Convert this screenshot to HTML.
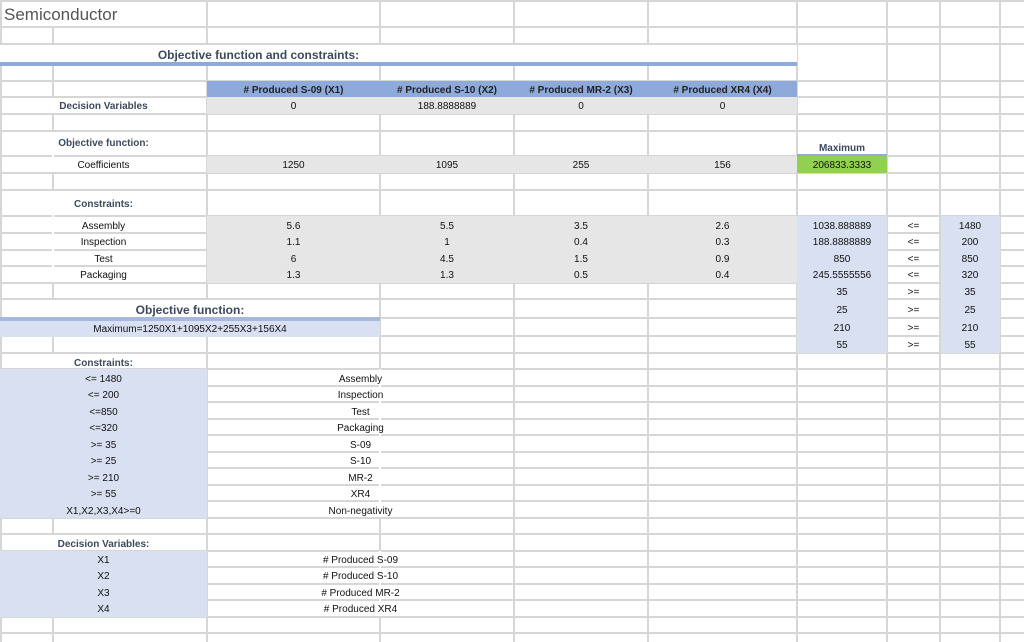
<!DOCTYPE html>
<html><head><meta charset="utf-8"><style>
body{margin:0;width:1024px;height:642px;overflow:hidden;background:#fff;position:relative;font-family:"Liberation Sans",sans-serif;font-size:10px;color:#111}
.h,.v{position:absolute;background:#d6d6d6}
.h{left:0;width:1024px;height:2px}
.v{top:0;height:642px;width:2px}
.f{position:absolute}
.c{position:absolute;text-align:center;display:flex;align-items:center;justify-content:center;white-space:nowrap}
.b{font-weight:bold;color:#3d4a5c}
.g{background:#e6e6e6}
.l{background:#d9e0f1}
.w{background:#fff}
</style></head><body>
<div id="grid"></div>
<script>
var g=document.getElementById('grid'),s='';
[0,26,43,80,96,113,130,155,172,189,215,232,249,265,282,298,317,335,352,368,385,401,418,434,451,467,484,500,517,533,550,566,583,599,616,632].forEach(function(y){s+='<div class="h" style="top:'+y+'px"></div>'});
[0,52,206,379,513,647,796,886,939,999].forEach(function(x){s+='<div class="v" style="left:'+x+'px"></div>'});
g.innerHTML=s;
</script>
<!-- white merges -->
<div class="f w" style="left:2px;top:2px;width:204px;height:24px"></div>
<div class="f w" style="left:0;top:45px;width:797px;height:17px"></div>
<div class="f w" style="left:2px;top:98px;width:204px;height:15px"></div>
<div class="f w" style="left:2px;top:132px;width:204px;height:23px"></div>
<div class="f w" style="left:52px;top:155px;width:2px;height:17px"></div>
<div class="f w" style="left:2px;top:191px;width:204px;height:24px"></div>
<div class="f w" style="left:52px;top:215px;width:2px;height:67px"></div>
<div class="f w" style="left:2px;top:300px;width:377px;height:17px"></div>
<div class="f w" style="left:2px;top:354px;width:204px;height:14px"></div>
<div class="f w" style="left:2px;top:535px;width:204px;height:15px"></div>
<div class="f w" style="left:379px;top:369px;width:2px;height:148px"></div>
<div class="f w" style="left:379px;top:551px;width:2px;height:65px"></div>
<div class="f w" style="left:798px;top:132px;width:88px;height:23px"></div>
<!-- fills -->
<div class="f" style="left:0;top:62px;width:797px;height:4px;background:#8eaadb"></div>
<div class="f" style="left:207px;top:81px;width:590px;height:16px;background:#8eaadb"></div>
<div class="f g" style="left:207px;top:97px;width:590px;height:17px"></div>
<div class="f g" style="left:207px;top:156px;width:590px;height:17px"></div>
<div class="f" style="left:797px;top:154px;width:90px;height:19px;background:#92d050"></div>
<div class="f" style="left:797px;top:154px;width:90px;height:2px;background:#8eaadb"></div>
<div class="f g" style="left:207px;top:216px;width:590px;height:67px"></div>
<div class="f l" style="left:797px;top:216px;width:90px;height:137px"></div>
<div class="f l" style="left:941px;top:216px;width:59px;height:137px"></div>
<div class="f" style="left:0;top:317px;width:380px;height:4px;background:#a6b8de"></div>
<div class="f l" style="left:0;top:321px;width:380px;height:16px"></div>
<div class="f l" style="left:0;top:369px;width:207px;height:149px"></div>
<div class="f l" style="left:0;top:551px;width:207px;height:66px"></div>
<!-- text -->
<div class="c" style="left:4px;top:2px;width:200px;height:26px;justify-content:flex-start;font-size:17px;color:#555">Semiconductor</div>
<div class="c b" style="left:0;top:45px;width:517px;height:20px;font-size:12px">Objective function and constraints:</div>
<div class="c b" style="left:207px;top:82px;width:173px;height:16px;color:#222">#&nbsp;Produced S-09 (X1)</div>
<div class="c b" style="left:380px;top:82px;width:134px;height:16px;color:#222"># Produced S-10 (X2)</div>
<div class="c b" style="left:514px;top:82px;width:134px;height:16px;color:#222"># Produced MR-2 (X3)</div>
<div class="c b" style="left:648px;top:82px;width:149px;height:16px;color:#222"># Produced XR4 (X4)</div>
<div class="c b" style="left:0;top:98px;width:207px;height:17px">Decision Variables</div>
<div class="c" style="left:207px;top:98px;width:173px;height:17px">0</div>
<div class="c" style="left:380px;top:98px;width:134px;height:17px">188.8888889</div>
<div class="c" style="left:514px;top:98px;width:134px;height:17px">0</div>
<div class="c" style="left:648px;top:98px;width:149px;height:17px">0</div>
<div class="c b" style="left:0;top:133px;width:207px;height:20px">Objective function:</div>
<div class="c b" style="left:797px;top:140px;width:90px;height:16px">Maximum</div>
<div class="c" style="left:0;top:157px;width:207px;height:17px">Coefficients</div>
<div class="c" style="left:207px;top:157px;width:173px;height:17px">1250</div>
<div class="c" style="left:380px;top:157px;width:134px;height:17px">1095</div>
<div class="c" style="left:514px;top:157px;width:134px;height:17px">255</div>
<div class="c" style="left:648px;top:157px;width:149px;height:17px">156</div>
<div class="c" style="left:797px;top:157px;width:90px;height:17px">206833.3333</div>
<div class="c b" style="left:0;top:194px;width:207px;height:20px">Constraints:</div>
<div id="rows"></div>
<script>
var d=[["Assembly","5.6","5.5","3.5","2.6","1038.888889","<=","1480"],["Inspection","1.1","1","0.4","0.3","188.8888889","<=","200"],["Test","6","4.5","1.5","0.9","850","<=","850"],["Packaging","1.3","1.3","0.5","0.4","245.5555556","<=","320"],["","","","","","35",">=","35"],["","","","","","25",">=","25"],["","","","","","210",">=","210"],["","","","","","55",">=","55"]];
var xs=[[0,207],[207,173],[380,134],[514,134],[648,149],[797,90],[887,53],[940,60]];
var ys=[218,234,251,267,284,302,320,337];var s='';
d.forEach(function(r,i){r.forEach(function(t,j){s+='<div class="c" style="left:'+xs[j][0]+'px;top:'+ys[i]+'px;width:'+xs[j][1]+'px;height:16px">'+t.replace(/</g,'&lt;').replace(/>/g,'&gt;')+'</div>'})});
document.getElementById('rows').innerHTML=s;
</script>
<div class="c b" style="left:0;top:301px;width:380px;height:18px;font-size:12px">Objective function:</div>
<div class="c" style="left:0;top:321px;width:380px;height:16px">Maximum=1250X1+1095X2+255X3+156X4</div>
<div class="c b" style="left:0;top:355px;width:207px;height:16px">Constraints:</div>
<div class="c" style="left:0;top:371px;width:207px;height:16px">&lt;= 1480</div>
<div class="c" style="left:0;top:387px;width:207px;height:16px">&lt;= 200</div>
<div class="c" style="left:0;top:404px;width:207px;height:16px">&lt;=850</div>
<div class="c" style="left:0;top:420px;width:207px;height:16px">&lt;=320</div>
<div class="c" style="left:0;top:437px;width:207px;height:16px">&gt;= 35</div>
<div class="c" style="left:0;top:453px;width:207px;height:16px">&gt;= 25</div>
<div class="c" style="left:0;top:470px;width:207px;height:16px">&gt;= 210</div>
<div class="c" style="left:0;top:486px;width:207px;height:16px">&gt;= 55</div>
<div class="c" style="left:0;top:503px;width:207px;height:16px">X1,X2,X3,X4&gt;=0</div>
<div class="c" style="left:207px;top:371px;width:307px;height:16px">Assembly</div>
<div class="c" style="left:207px;top:387px;width:307px;height:16px">Inspection</div>
<div class="c" style="left:207px;top:404px;width:307px;height:16px">Test</div>
<div class="c" style="left:207px;top:420px;width:307px;height:16px">Packaging</div>
<div class="c" style="left:207px;top:437px;width:307px;height:16px">S-09</div>
<div class="c" style="left:207px;top:453px;width:307px;height:16px">S-10</div>
<div class="c" style="left:207px;top:470px;width:307px;height:16px">MR-2</div>
<div class="c" style="left:207px;top:486px;width:307px;height:16px">XR4</div>
<div class="c" style="left:207px;top:503px;width:307px;height:16px">Non-negativity</div>
<div class="c b" style="left:0;top:536px;width:207px;height:16px">Decision Variables:</div>
<div class="c" style="left:0;top:552px;width:207px;height:16px">X1</div>
<div class="c" style="left:0;top:568px;width:207px;height:16px">X2</div>
<div class="c" style="left:0;top:585px;width:207px;height:16px">X3</div>
<div class="c" style="left:0;top:601px;width:207px;height:16px">X4</div>
<div class="c" style="left:207px;top:552px;width:307px;height:16px"># Produced S-09</div>
<div class="c" style="left:207px;top:568px;width:307px;height:16px"># Produced S-10</div>
<div class="c" style="left:207px;top:585px;width:307px;height:16px"># Produced MR-2</div>
<div class="c" style="left:207px;top:601px;width:307px;height:16px"># Produced XR4</div>
</body></html>
